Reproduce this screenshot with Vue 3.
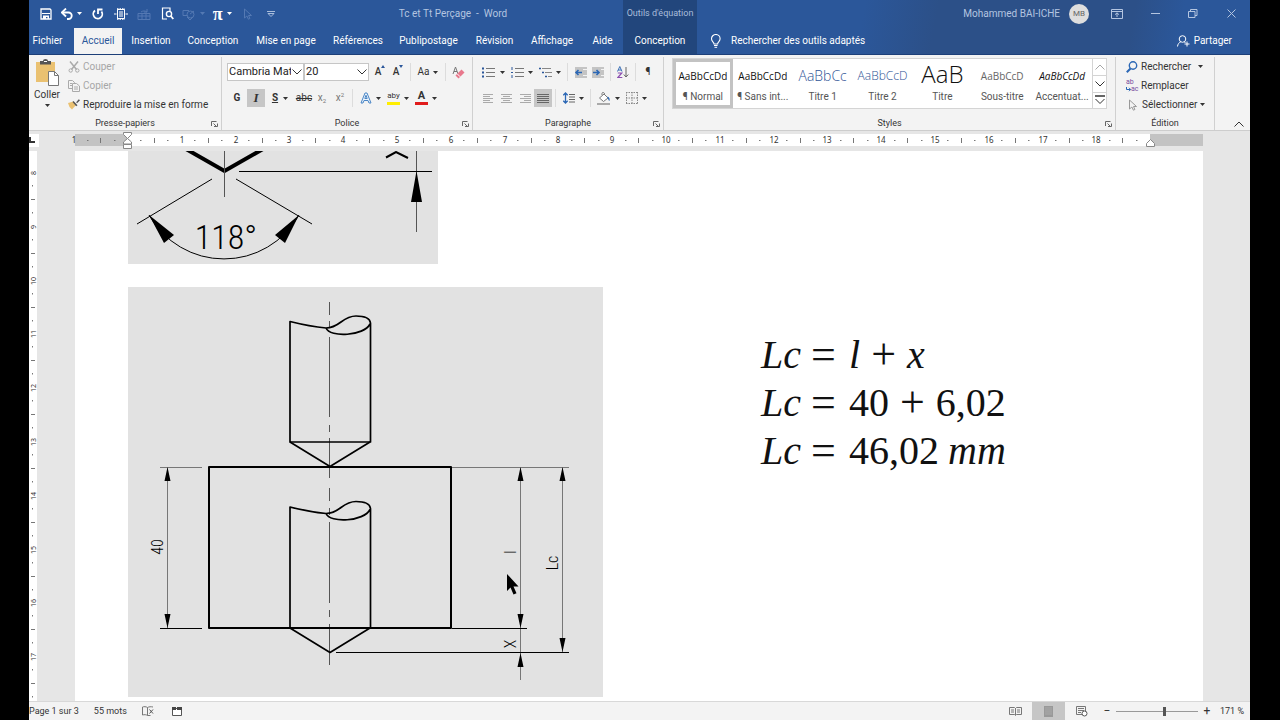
<script setup>
import { h, ref } from 'vue'

const shapes = {
  save: [12, 12, '<path d="M1 1h9l1 1v9H1z" fill="none" stroke="currentColor" stroke-width="1.3"/><path d="M2 5.5h8" stroke="currentColor"/><path d="M3 11V7.5h6V11H7.5V9H6v2z" fill="currentColor"/>'],
  undo: [12, 12, '<path d="M2 4.5h5.5a3.2 3.2 0 0 1 0 6.500H6" fill="none" stroke="currentColor" stroke-width="1.8"/><path d="M5 .5L.8 4.500 5 8.500" fill="none" stroke="currentColor" stroke-width="1.8"/>'],
  redo: [12, 12, '<path d="M3 2.500A4.500 4.500 0 1 0 9.500 3.500" fill="none" stroke="currentColor" stroke-width="1.8"/><path d="M6 6V1.500h4.500" fill="none" stroke="currentColor" stroke-width="1.8"/>'],
  fit: [14, 12, '<path d="M3.500 1.500h7v9h-7z" fill="none" stroke="currentColor"/><path d="M3 1h8M3 11h8" stroke="currentColor" stroke-width="1.600" stroke-dasharray="1.500 1"/><path d="M0 6h2.500M11.500 6H14M5 4h4M5 6h4M5 8h4" stroke="currentColor"/>'],
  package: [14, 12, '<path d="M1 5.500h12v6H1zM1 8h12M5 5v6M9 5v6M4 4a4 3 0 0 1 6 0M10 1v3H7" fill="none" stroke="currentColor"/>'],
  preview: [13, 13, '<path d="M9 4V1H1.500v11H6" fill="none" stroke="currentColor" stroke-width="1.200"/><circle cx="8" cy="7" r="2.600" fill="none" stroke="currentColor" stroke-width="1.400"/><path d="M9.800 9l2.500 3" stroke="currentColor" stroke-width="1.800"/>'],
  shapes: [14, 12, '<circle cx="8.500" cy="6.500" r="3.500" fill="none" stroke="currentColor"/><path d="M7 2.500H1v5h4M8 6l4-3M5 9l3 3 3-3" fill="none" stroke="currentColor"/>'],
  pointer: [10, 12, '<path d="M1.500 1v9l2.400-2 1.500 3.200 1.500-.7L5.500 7.500h3z" fill="none" stroke="currentColor"/>'],
  custom: [8, 6, '<path d="M0 .5h8M1 2.500h6L4 5.500z" fill="none" stroke="currentColor"/>'],
  caret: [5, 3, '<path d="M0 0h5L2.500 3z" fill="currentColor"/>'],
  bulb: [12, 14, '<path d="M4 10c0-2-2.500-2.500-2.500-5.200a4.300 4.300 0 0 1 8.600 0C10.100 7.500 7.600 8 7.600 10z" fill="none" stroke="currentColor" stroke-width="1.100"/><path d="M4 11.500h3.600M4.500 13.300h2.600" stroke="currentColor"/>'],
  share: [13, 12, '<circle cx="5.500" cy="4" r="3.300" fill="none" stroke="currentColor"/><path d="M.5 11.500c.3-2.500 1.500-4 3-4.300M7.500 7l1 1M10 6.500v5M7.500 9h5" fill="none" stroke="currentColor"/>'],
  ribbonView: [12, 10, '<path d="M.5.500h11v9H.500zM.500 2.500h11M6 8V4M4 5.700l2-1.900 2 1.900" fill="none" stroke="currentColor"/>'],
  minimize: [9, 9, '<path d="M0 4.500h9" stroke="currentColor"/>'],
  restore: [10, 10, '<path d="M.5 2.500h6.500v6H.5zM2.500 2.500v-2H9v6H7" fill="none" stroke="currentColor"/>'],
  close: [9, 9, '<path d="M.5.500l8 8M8.500.500l-8 8" stroke="currentColor"/>'],
  paste: [24, 27, '<path d="M1 3h19v20H1z" fill="#eac171"/><path d="M5 2h3a2.500 2 0 0 1 5 0h3v3.500H5z" fill="#555"/><path d="M9 2.500h3" stroke="#fff"/><path d="M13.500 12.500h6l4 4v10h-10z" fill="#fff" stroke="#777"/><path d="M19.500 12.500v4h4" fill="none" stroke="#777"/>'],
  cut: [12, 12, '<path d="M2 .5l6.500 8M10 .5L3.500 8.500" stroke="#aaa" stroke-width="1.500"/><circle cx="2.700" cy="9.500" r="1.700" fill="none" stroke="#aaa"/><circle cx="9.300" cy="9.500" r="1.700" fill="none" stroke="#aaa"/>'],
  copy: [12, 12, '<path d="M.5.500h4l2 2v6h-6z" fill="#f3f3f3" stroke="#aaa"/><path d="M4.500 3.500h4l3 2.500v5.500h-7z" fill="#f3f3f3" stroke="#aaa"/><path d="M6 7h4M6 9h4M2 3.500h2M2 5.500h2" stroke="#aaa"/>'],
  brush: [12, 11, '<path d="M0 4l5.500-1.500L8 6 4 10.500 1.500 8z" fill="#eac171"/><path d="M4.500 3l1-1 4 4.200-1.300 1zM8.200 3.200L10.800.3l1.200 1-3 3z" fill="#555"/>'],
  chevron: [10, 6, '<path d="M.5.500L5 5 9.500.500" fill="none" stroke="currentColor"/>'],
  up: [10, 6, '<path d="M.5 5.500L5 1l4.500 4.500" fill="none" stroke="currentColor"/>'],
  more: [10, 10, '<path d="M0 1h10" stroke="currentColor" stroke-width="1.500"/><path d="M.5 4L5 8.500 9.500 4" fill="none" stroke="currentColor"/>'],
  launcher: [7, 6, '<path d="M.5 5V.5h5" fill="none" stroke="#666"/><path d="M2.500 2.500l3 3M6.500 2.500v3h-3.500" fill="none" stroke="#666"/>'],
  growMark: [4, 3, '<path d="M0 3h4L2 0z" fill="#2b579a"/>'],
  shrinkMark: [4, 3, '<path d="M0 0h4L2 3z" fill="#2b579a"/>'],
  eraser: [13, 13, '<path d="M1 8L3.500 1 6 8M2 5.500h3" fill="none" stroke="#777"/><path d="M3.500 9.500l6-6 3 3-6 6z" fill="#e8788c"/><path d="M5.200 7.800l3 3" stroke="#fff"/>'],
  textFx: [12, 12, '<path d="M1 11L5 1h2l4 10H9L8 8.500H4L3 11zM4.800 6.500h2.400L6 3.200z" fill="#eaf3fc" stroke="#4a86c6"/>'],
  bullets: [13, 11, '<path d="M0 1.500h2M0 5.500h2M0 9.500h2" stroke="#2b579a" stroke-width="1.800"/><path d="M4 1.500h9M4 5.500h9M4 9.500h9" stroke="#777"/>'],
  numbers: [13, 11, '<path d="M1 0v3M0 5.500h2M1 8v3" stroke="#2b579a"/><path d="M4 1.500h9M4 5.500h9M4 9.500h9" stroke="#777"/>'],
  levels: [13, 11, '<path d="M0 1.500h2M3 5.500h2M6 9.500h2" stroke="#2b579a" stroke-width="1.600"/><path d="M3 1.500h9M6 5.500h7M9 9.500h4" stroke="#888"/>'],
  outdent: [13, 11, '<path d="M1 0h12v11H1z" fill="#c4c4c4"/><path d="M8 5.500H2.500M4.500 3l-2.500 2.500 2.500 2.500" fill="none" stroke="#2b67b5" stroke-width="1.600"/><path d="M9 2.500h4M9 8.500h4" stroke="#f3f3f3"/>'],
  indent: [13, 11, '<path d="M0 0h12v11H0z" fill="#c4c4c4"/><path d="M1 5.500h6M4.500 3l2.500 2.500-2.500 2.500" fill="none" stroke="#2b67b5" stroke-width="1.600"/><path d="M9 2.500h4M9 8.500h4" stroke="#f3f3f3"/>'],
  sort: [12, 12, '<path d="M.5 5.500L2.800.5 5 5.500M1.200 4h3" fill="none" stroke="#3b6fb5"/><path d="M.8 7h4L.8 11.500h4.500" fill="none" stroke="#8c4fb0" stroke-width="1.200"/><path d="M9 1v10M6.800 8.500L9 11l2.300-2.500" fill="none" stroke="#666"/>'],
  left: [11, 9, '<path d="M1 .5h10M1 2.500h7M1 4.500h10M1 6.500h7M1 8.500h10" stroke="#aaa"/>'],
  center: [11, 9, '<path d="M0 .5h11M2 2.500h7M0 4.500h11M2 6.500h7M0 8.500h11" stroke="#aaa"/>'],
  right: [11, 9, '<path d="M0 .5h11M4 2.500h7M0 4.500h11M4 6.500h7M0 8.500h11" stroke="#aaa"/>'],
  justify: [12, 9, '<path d="M0 .5h12M0 2.500h12M0 4.500h12M0 6.500h12M0 8.500h12" stroke="#666"/>'],
  spacing: [12, 12, '<path d="M2.500 1v10M.3 3.200L2.500 1l2.200 2.200M.3 8.800L2.500 11l2.200-2.200" fill="none" stroke="#2b67b5" stroke-width="1.300"/><path d="M6 2.500h6M6 5h6M6 7.500h6M6 10h6" stroke="#666"/>'],
  fill: [14, 13, '<path d="M2.500 6L7 2l4 4-4.500 3.500zM5 3V1.500C5 0 7.500 0 7.500 2" fill="#fff" stroke="#777"/><path d="M10.500 4.500c2 .5 2.500 2.500 2 4.500-1.200-.5-1-2-2-3z" fill="#2b67b5"/><path d="M0 11h13v2H0z" fill="#aaa"/>'],
  borders: [12, 12, '<path d="M.5 0v12M6 0v12M11.500 0v12M0 .5h12M0 6h12M0 11.500h12" stroke="#888" stroke-dasharray="1.500 1"/>'],
  search: [12, 12, '<circle cx="7" cy="4.500" r="3.700" fill="none" stroke="#2b67b5" stroke-width="1.400"/><path d="M4.500 7.500L.8 11.300" stroke="#2b67b5" stroke-width="2"/>'],
  arrowTo: [5, 5, '<path d="M.5 0v2.500h4M3 .8l1.700 1.700L3 4.200" fill="none" stroke="#2b67b5"/>'],
  proof: [12, 10, '<path d="M5.500 1.500C4 .5 2 .5.500 1v8c2-.5 3.500-.5 5 .5zM5.500 1.500C7 .7 9 .5 11 1M5.500 9.500h3" fill="none" stroke="#777"/><path d="M7.500 3.500l3.500 4M11 3.500l-3.500 4" stroke="#555"/>'],
  macro: [10, 10, '<path d="M.5 2.500h9v7h-9z" fill="#fff" stroke="#555"/><path d="M0 1h4v3H0zM5 1h5v3H5z" fill="#444"/>'],
  read: [13, 9, '<path d="M.5.500h5l1 1 1-1h5v7h-5l-1 1-1-1h-5zM6.500 1v7M2 3h3M2 5h3M8 3h3M8 5h3" fill="none" stroke="#777"/>'],
  print: [9, 11, '<path d="M0 0h9v11H0z" fill="#999"/><path d="M1 2h7M1 4h7M1 6h7M1 8h7" stroke="#aaa"/>'],
  web: [12, 11, '<path d="M.5.500h9v8h-9zM2 2.500h6M2 4.500h6M2 6.500h3" fill="none" stroke="#777"/><circle cx="8.500" cy="7.500" r="2.500" fill="#fff" stroke="#555"/>'],
}
const Ico = (p) => {
  const [w, ht, body] = shapes[p.n]
  return h('svg', { width: w, height: ht, viewBox: `0 0 ${w} ${ht}`, 'aria-hidden': 'true', innerHTML: body })
}
Ico.props = ['n']

const tabs = ['Fichier', 'Accueil', 'Insertion', 'Conception', 'Mise en page', 'Références', 'Publipostage', 'Révision', 'Affichage', 'Aide', 'Conception']
const styles = [
  { s: 'AaBbCcDd', n: '¶ Normal', c: 'body' },
  { s: 'AaBbCcDd', n: '¶ Sans int...', c: 'body' },
  { s: 'AaBbCc', n: 'Titre 1', c: 't1' },
  { s: 'AaBbCcD', n: 'Titre 2', c: 't2' },
  { s: 'AaB', n: 'Titre', c: 't0' },
  { s: 'AaBbCcD', n: 'Sous-titre', c: 'sub' },
  { s: 'AaBbCcDd', n: 'Accentuat...', c: 'em' },
]
const cm = 53.8
const hNums = [-1, ...Array.from({ length: 18 }, (_, i) => i + 1)]
const hSteps = Array.from({ length: 20 }, (_, i) => i - 1)
const vNums = Array.from({ length: 10 }, (_, i) => i + 8)
const font = ref('Cambria Math')
const size = ref('20')
const zoom = ref(59)
</script>

<template>
  <div class="word">
    <header class="head">
      <div class="titlebar">
        <div class="quick">
          <button class="q1" aria-label="Enregistrer"><Ico n="save" /></button>
          <button class="q2" aria-label="Annuler"><Ico n="undo" /><Ico n="caret" /></button>
          <button class="q1" aria-label="Rétablir"><Ico n="redo" /></button>
          <button class="q1" aria-label="Une page"><Ico n="fit" /></button>
          <button class="q1 dim" aria-label="Envoyer"><Ico n="package" /></button>
          <button class="q1" aria-label="Aperçu"><Ico n="preview" /></button>
          <button class="q2 dim" aria-label="Formes"><Ico n="shapes" /><Ico n="caret" /></button>
          <button class="q2 pi" aria-label="Équation">π<Ico n="caret" /></button>
          <button class="q1 dim" aria-label="Sélection"><Ico n="pointer" /></button>
          <button class="q1 soft" aria-label="Personnaliser"><Ico n="custom" /></button>
        </div>
        <div class="doc-name">Tc et Tt Perçage&nbsp; - &nbsp;Word</div>
        <div class="context">Outils d'équation</div>
        <div class="account">
          <span>Mohammed BAI-ICHE</span>
          <span class="avatar">MB</span>
          <button aria-label="Options du ruban"><Ico n="ribbonView" /></button>
          <button aria-label="Réduire"><Ico n="minimize" /></button>
          <button aria-label="Restaurer"><Ico n="restore" /></button>
          <button aria-label="Fermer"><Ico n="close" /></button>
        </div>
      </div>
      <div class="tabbar">
        <nav class="tabs">
          <button v-for="(t, i) in tabs" :key="i" :class="{ on: i === 1, ctx: i === 10 }">{{ t }}</button>
        </nav>
        <button class="tell"><Ico n="bulb" />Rechercher des outils adaptés</button>
        <button class="share"><Ico n="share" />Partager</button>
      </div>
    </header>

    <section class="ribbon">
      <div class="group clip">
        <div class="clip-body">
          <button class="paste"><Ico n="paste" /><span>Coller</span><Ico n="caret" /></button>
          <div class="stack">
            <button class="off"><Ico n="cut" />Couper</button>
            <button class="off"><Ico n="copy" />Copier</button>
            <button><Ico n="brush" />Reproduire la mise en forme</button>
          </div>
        </div>
        <footer><span>Presse-papiers</span><button aria-label="Options du presse-papiers"><Ico n="launcher" /></button></footer>
      </div>

      <div class="group police">
        <div class="rows">
          <div class="row">
            <span class="combo name"><select v-model="font" aria-label="Police"><option>Cambria Math</option></select><Ico n="chevron" /></span>
            <span class="combo size"><select v-model="size" aria-label="Taille"><option>20</option></select><Ico n="chevron" /></span>
            <button class="w18 mark" aria-label="Agrandir"><b>A</b><Ico n="growMark" /></button>
            <button class="w18 mark" aria-label="Réduire la taille"><b>A</b><Ico n="shrinkMark" /></button>
            <i class="sep"></i>
            <button class="w28">Aa<Ico n="caret" /></button>
            <i class="sep"></i>
            <button class="w18" aria-label="Effacer la mise en forme"><Ico n="eraser" /></button>
          </div>
          <div class="row">
            <button class="w20"><b>G</b></button>
            <button class="w18 active"><b class="ital">I</b></button>
            <button class="w30"><b class="under">S</b><Ico n="caret" /></button>
            <button class="w18 strike">abc</button>
            <button class="w18 lite">x<sub>2</sub></button>
            <button class="w18 lite">x<sup>2</sup></button>
            <i class="sep"></i>
            <button class="w28" aria-label="Effets"><Ico n="textFx" /><Ico n="caret" /></button>
            <button class="w28" aria-label="Surlignage"><span class="ink yellow">aby</span><Ico n="caret" /></button>
            <button class="w28" aria-label="Couleur"><span class="ink red">A</span><Ico n="caret" /></button>
          </div>
        </div>
        <footer><span>Police</span><button aria-label="Options de police"><Ico n="launcher" /></button></footer>
      </div>

      <div class="group para">
        <div class="rows">
          <div class="row">
            <button class="w30" aria-label="Puces"><Ico n="bullets" /><Ico n="caret" /></button>
            <button class="w28" aria-label="Numérotation"><Ico n="numbers" /><Ico n="caret" /></button>
            <button class="w28" aria-label="Niveaux"><Ico n="levels" /><Ico n="caret" /></button>
            <i class="sep"></i>
            <button class="w18" aria-label="Diminuer le retrait"><Ico n="outdent" /></button>
            <button class="w18" aria-label="Augmenter le retrait"><Ico n="indent" /></button>
            <i class="sep"></i>
            <button class="w18" aria-label="Trier"><Ico n="sort" /></button>
            <i class="sep"></i>
            <button class="w18">¶</button>
          </div>
          <div class="row">
            <button class="w18" aria-label="Gauche"><Ico n="left" /></button>
            <button class="w20" aria-label="Centrer"><Ico n="center" /></button>
            <button class="w18" aria-label="Droite"><Ico n="right" /></button>
            <button class="w18 active" aria-label="Justifier"><Ico n="justify" /></button>
            <i class="sep"></i>
            <button class="w28" aria-label="Interligne"><Ico n="spacing" /><Ico n="caret" /></button>
            <i class="sep"></i>
            <button class="w28" aria-label="Trame"><Ico n="fill" /><Ico n="caret" /></button>
            <button class="w28" aria-label="Bordures"><Ico n="borders" /><Ico n="caret" /></button>
          </div>
        </div>
        <footer><span>Paragraphe</span><button aria-label="Options de paragraphe"><Ico n="launcher" /></button></footer>
      </div>

      <div class="group gallery">
        <div class="cards">
          <button v-for="(s, i) in styles" :key="i" class="card" :class="{ picked: i === 0 }">
            <span class="sample" :class="s.c">{{ s.s }}</span>
            <span class="label">{{ s.n }}</span>
          </button>
          <div class="scroll">
            <button class="off" aria-label="Monter"><Ico n="up" /></button>
            <button aria-label="Descendre"><Ico n="chevron" /></button>
            <button aria-label="Autres"><Ico n="more" /></button>
          </div>
        </div>
        <footer><span>Styles</span><button aria-label="Options de styles"><Ico n="launcher" /></button></footer>
      </div>

      <div class="group edit">
        <div class="stack">
          <button><Ico n="search" />Rechercher<Ico n="caret" class="end" /></button>
          <button><span class="abac"><span>ab</span><span><Ico n="arrowTo" />ac</span></span>Remplacer</button>
          <button><Ico n="pointer" class="grey" />Sélectionner<Ico n="caret" /></button>
        </div>
        <footer><span>Édition</span></footer>
      </div>
      <button class="collapse" aria-label="Réduire le ruban"><Ico n="up" /></button>
    </section>

    <div class="ruler">
      <span class="tabstop"><svg width="6" height="6" viewBox="0 0 6 6"><path d="M1 0v5h5" fill="none" stroke="#333" stroke-width="2" /></svg></span>
      <div class="scale">
        <svg width="100%" height="18">
          <g class="ticks">
            <template v-for="k in hSteps" :key="k">
              <path :d="`M${Math.round(52 + (k + 0.5) * cm)}.5 7v5`" />
              <path :d="`M${Math.round(52 + (k + 0.25) * cm)} 9.500h1.500M${Math.round(52 + (k + 0.75) * cm)} 9.500h1.500`" />
            </template>
          </g>
          <text v-for="n in hNums" :key="n" :x="Math.round(53 + n * cm)" y="12">{{ Math.abs(n) }}</text>
          <g fill="#fff" stroke="#888">
            <path d="M48.500 1.500h8v2l-4 4-4-4zM52.500 7.500l4 3.500v2h-8v-2zM48.500 13.500h8v4h-8z" />
            <path d="M1075.500 8.500l4 4v3h-8v-3z" />
          </g>
        </svg>
      </div>
    </div>

    <main class="canvas">
      <div class="vruler">
        <svg width="8" height="550" viewBox="0 151 8 550">
          <g v-for="n in vNums" :key="n">
            <text :transform="`translate(7 ${Math.round(173 + (n - 8) * cm)}) rotate(-90)`">{{ n }}</text>
            <path :d="`M2 ${Math.round(199 + (n - 8) * cm)}.5h4M3.500 ${Math.round(185 + (n - 8) * cm)}v1.500M3.500 ${Math.round(212 + (n - 8) * cm)}v1.500`" stroke="#777" />
          </g>
        </svg>
      </div>
      <article class="page">
        <div class="figures">
          <svg class="fig" width="310" height="113" viewBox="128 151 310 113" role="img" aria-label="Angle de pointe">
            <g fill="none" stroke="#000">
              <path d="M186 149l38.500 22L263 149" stroke-width="4" />
              <path d="M224.500 151v46M416.500 151v81" stroke="#555" />
              <path d="M239 171.500h193M212 179l-75 45M236 179l76 45M149 215a86 86 0 0 0 150 0" />
              <path d="M386 157.500l10-5.500 12 6" stroke-width="2" />
            </g>
            <path d="M149 215l25 20-10 8zM299 215l-24 20 10 8zM416.500 171l5.500 31h-11z" />
            <text class="cad big" x="226" y="249">118°</text>
          </svg>
          <svg class="fig" width="475" height="410" viewBox="128 287 475 410" role="img" aria-label="Course de perçage">
            <g fill="none" stroke="#555">
              <path d="M329.500 302v13M329.500 321v6M329.500 337v80M329.500 425v7M329.500 438v40M329.500 488v13M329.500 508v7M329.500 522v81M329.500 610v7M329.500 624v41" />
              <path d="M160 467.500h42M452 467.500h117M167.500 467v161M520.500 467v213M562.500 467v186" stroke="#777" />
              <path d="M160 628.500h42M452 628.500h75M336 652.500h233" stroke="#000" />
            </g>
            <g fill="none" stroke="#000" stroke-width="2" stroke-linejoin="round">
              <path d="M209 467h242v161H209z" />
              <path d="M290 442V321.500q20 5 36 6.500c14 0 16-12 30-12 10 0 14 3 14.500 7V442zM326 328c4 10 38 8 44-4" stroke-width="1.700" />
              <path d="M290 442l40 24.500 40-24.500" stroke-width="1.700" />
              <path d="M290 628V507q20 5 36 6.500c14 0 16-12 30-12 10 0 14 3 14.500 7V628zM326 513.500c4 10 38 8 44-4" stroke-width="1.700" />
              <path d="M290 628l40 24.500 40-24.500" stroke-width="1.700" />
            </g>
            <path d="M167.500 467l3 14h-6zM167.500 628l3-14h-6zM520.500 467l3 14h-6zM520.500 628l3-14h-6zM562.500 467l3 14h-6zM562.500 652l3-14h-6zM520.500 653l3 14h-6z" />
            <text class="cad" transform="translate(163 547) rotate(-90)">40</text>
            <text class="cad" transform="translate(516 552) rotate(-90)">l</text>
            <text class="cad" transform="translate(558 563) rotate(-90)">Lc</text>
            <text class="cad" transform="translate(516 644) rotate(-90)">X</text>
            <path d="M507 574v17l3.500-3.500 3 7 3-1.300-3-6.700h5z" />
          </svg>
        </div>
        <div class="math">
          <p><i>Lc</i><span class="eq">=</span><i>l</i><span class="op">+</span><i>x</i></p>
          <p><i>Lc</i><span class="eq">=</span>40<span class="op">+</span>6,02</p>
          <p><i>Lc</i><span class="eq">=</span>46,02<i class="unit">mm</i></p>
        </div>
      </article>
    </main>

    <footer class="status">
      <span>Page 1 sur 3</span>
      <span class="words">55 mots</span>
      <Ico n="proof" />
      <Ico n="macro" class="mac" />
      <div class="views">
        <button aria-label="Lecture"><Ico n="read" /></button>
        <button class="active" aria-label="Page"><Ico n="print" /></button>
        <button aria-label="Web"><Ico n="web" /></button>
      </div>
      <button class="pm" aria-label="Zoom arrière">−</button>
      <input v-model="zoom" type="range" min="0" max="100" aria-label="Zoom" />
      <button class="pm" aria-label="Zoom avant">+</button>
      <span class="pct">171 %</span>
    </footer>
  </div>
</template>

<style>
html, body { background: #000; }
</style>

<style scoped>
.word { display: flex; flex-direction: column; height: 100vh; margin: 0 30px 0 29px; overflow: hidden; font: 10px/14px Roboto, "Open Sans", sans-serif; color: #333; background: #f3f3f3; }
.word * { box-sizing: border-box; }
svg { display: block; flex: none; }
button { font: inherit; color: inherit; background: none; border: 0; padding: 0; margin: 0; display: flex; align-items: center; justify-content: center; white-space: nowrap; }
p { margin: 0; }

.head { flex: none; background: linear-gradient(100deg, #2b579a 68%, #2c5088 74%, #2c5088 90%, #2b579a 94%); color: #fff; border-bottom: 1px solid #1d3f78; }
.titlebar { display: grid; grid-template-columns: 254px 340px 74px 1fr; height: 27px; align-items: center; }
.quick { display: flex; align-items: center; padding-left: 5px; }
.q1 { width: 24px; height: 24px; }
.q2 { width: 30px; height: 24px; gap: 4px; }
.dim { color: #5479b3; }
.soft { color: #a9bddb; }
.pi { font: bold 18px/20px "Liberation Serif", serif; }
.doc-name { text-align: center; color: #b4c5e0; }
.context { align-self: stretch; background: #22467c; color: #a9bddb; font-size: 9px; line-height: 27px; text-align: center; white-space: nowrap; }
.account { display: flex; align-items: center; justify-content: flex-end; color: #b4c5e0; }
.account button { width: 38px; }
.avatar { width: 20px; height: 20px; margin: 0 9px; border-radius: 50%; background: #dedede; color: #666; font-size: 8px; line-height: 20px; text-align: center; }
.tabbar { display: flex; align-items: stretch; height: 27px; }
.tabs { display: grid; grid-template-columns: 45px 48px 58px 66px 80px 64px 77px 55px 60px 41px 74px; }
.tabs button:first-child { padding-right: 8px; }
.tabs .on { background: #f3f3f3; color: #2b579a; margin-top: 1px; }
.tabs .ctx { background: #22467c; }
.tell { margin-left: 13px; gap: 9px; }
.share { margin-left: auto; margin-right: 18px; gap: 4px; }

.ribbon { flex: none; display: flex; height: 76px; border-bottom: 1px solid #cdcdcd; }
.group { display: flex; flex-direction: column; justify-content: space-between; margin: 2px 0 0; border-right: 1px solid #d0d0d0; }
.group footer { display: grid; grid-template-columns: 14px 1fr 14px; height: 13px; font-size: 9px; line-height: 13px; text-align: center; }
.group footer span { grid-column: 2; }
.clip { width: 193px; }
.police { width: 251px; }
.para { width: 191px; }
.gallery { width: 452px; }
.edit { width: 99px; }
.clip-body { display: flex; }
.paste { flex-direction: column; align-self: flex-start; width: 36px; gap: 2px; padding-top: 2px; }
.stack { display: flex; flex-direction: column; padding-left: 3px; }
.stack button { height: 19px; justify-content: flex-start; gap: 3px; }
.off { color: #a6a6a6; }
.rows { display: flex; flex-direction: column; gap: 8px; padding: 6px 0 0 5px; }
.row { display: flex; align-items: center; height: 18px; }
.combo { display: grid; align-items: center; height: 18px; border: 1px solid #c6c6c6; background: #fff; }
.combo select { grid-area: 1 / 1; width: 100%; height: 16px; padding: 0 12px 0 1px; border: 0; background: none; appearance: none; font: inherit; font-size: 11px; color: #222; }
.combo svg { grid-area: 1 / 1; justify-self: end; margin-right: 1px; pointer-events: none; background: #fff; }
.name { width: 77px; }
.size { width: 65px; margin-right: 2px; }
.w18 { width: 18px; height: 18px; }
.w20 { width: 20px; height: 18px; }
.w28 { width: 28px; height: 18px; gap: 4px; }
.w30 { width: 30px; height: 18px; gap: 5px; }
.mark b { font-weight: 500; }
.mark svg { align-self: flex-start; margin-top: 2px; }
.active { background: #c6c6c6; }
.ital { font-family: "Liberation Serif", serif; font-style: italic; font-size: 13px; }
.under { text-decoration: underline; }
.strike { text-decoration: line-through; }
.lite { color: #777; }
.lite sub, .lite sup { font-size: 6px; line-height: 6px; }
.lite sub { align-self: flex-end; margin-bottom: 3px; }
.lite sup { align-self: flex-start; margin-top: 3px; }
.ink { width: 13px; height: 14px; font-size: 8px; line-height: 10px; text-align: center; border-bottom: 3px solid; }
.yellow { border-color: #ffee00; }
.red { border-color: #e01b1b; font-size: 11px; font-weight: bold; }
.sep { width: 1px; height: 18px; margin: 0 3px; background: #dcdcdc; }

.cards { display: flex; margin: 1px 8px 0; height: 51px; border: 1px solid #d4d4d4; background: #fff; }
.card { flex: 1 1 0; min-width: 0; flex-direction: column; justify-content: flex-end; border: 3px solid transparent; color: #555; }
.picked { border-color: #c3c3c3; }
.sample { display: block; height: 26px; line-height: 26px; color: #111; font-family: "Open Sans", sans-serif; font-size: 10px; }
.label { line-height: 16px; }
.t1 { font-size: 14px; color: #2f5496; font-weight: 300; }
.t2 { font-size: 12px; color: #2f5496; font-weight: 300; }
.t0 { font-size: 24px; line-height: 22px; font-weight: 300; }
.sub { color: #666; }
.em { font-style: italic; }
.scroll { flex: none; display: grid; grid-template-rows: 1fr 1fr 1fr; width: 14px; border-left: 1px solid #d4d4d4; }
.scroll button + button { border-top: 1px solid #d4d4d4; }
.edit .stack { padding-left: 10px; }
.end { margin-left: 4px; }
.grey { color: #999; margin: 0 1px 0 2px; }
.abac { display: flex; flex-direction: column; width: 12px; font-size: 7px; line-height: 7px; color: #7a4fa0; }
.abac span { display: flex; align-items: center; }
.collapse { align-self: flex-end; margin: 0 6px 3px auto; }

.ruler { flex: none; display: grid; grid-template-columns: 46px 1fr 47px; height: 20px; background: #e6e6e6; align-items: start; }
.tabstop { width: 10px; height: 13px; margin-top: 3px; padding: 3px 0 0; background: #fff; }
.scale { height: 18px; background: linear-gradient(90deg, #c3c3c3 52px, #fff 52px, #fff calc(100% - 53px), #c3c3c3 calc(100% - 53px)) 0 3px / 100% 12px no-repeat; }
.scale svg { overflow: visible; }
.scale text, .vruler text { font: 8px "Noto Sans", sans-serif; text-anchor: middle; fill: #333; }
.vruler text { font-size: 7px; }
.ticks { stroke: #777; fill: none; }

.canvas { flex: 1; min-height: 0; display: grid; grid-template-columns: 46px 1fr 47px; background: #e6e6e6; overflow: hidden; }
.vruler { width: 8px; background: #fff; }
.page { display: flex; align-items: flex-start; gap: 158px; padding-left: 53px; background: #fff; }
.figures { display: grid; gap: 23px; }
.fig { background: #e2e2e2; }
.cad { font: 300 16px "Roboto Condensed", Lato, sans-serif; text-anchor: middle; }
.big { font-size: 34px; }
.math { padding-top: 180px; font: 40px/48px "Liberation Serif", serif; color: #111; white-space: nowrap; }
.math p { display: grid; grid-template-columns: 50px 38px; grid-auto-flow: column; justify-content: start; height: 48px; }
.op, .eq { font-size: 44px; }
.op { margin: 0 11px; }
.unit { margin-left: 9px; }

.status { flex: none; display: flex; align-items: center; height: 19px; font-size: 9px; border-top: 1px solid #d8d8d8; }
.words { margin: 0 15px; }
.mac { margin-left: 18px; }
.views { display: flex; margin-left: auto; }
.views button { width: 33px; height: 18px; }
.pm { width: 18px; font-size: 12px; }
.status input { width: 82px; height: 12px; margin: 0; appearance: none; background: linear-gradient(#999, #999) center / 100% 1px no-repeat; }
.status input::-webkit-slider-thumb { appearance: none; width: 3px; height: 9px; background: #555; }
.pct { margin: 0 6px 0 4px; }
</style>
